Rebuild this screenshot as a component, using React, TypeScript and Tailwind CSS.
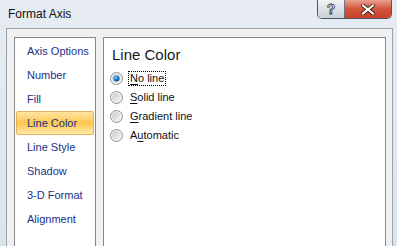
import React from "react";

const items = ["Axis Options", "Number", "Fill", "Line Color", "Line Style", "Shadow", "3-D Format", "Alignment"];

function Radio({ checked }: { checked?: boolean }) {
  return (
    <svg width="13" height="13" viewBox="0 0 13 13" className="shrink-0">
      <defs>
        <linearGradient id={checked ? "rgc" : "rgu"} x1="0" y1="0" x2="1" y2="1">
          <stop offset="0" stopColor="#c9c9c9" />
          <stop offset="1" stopColor="#f6f6f6" />
        </linearGradient>
        <radialGradient id="dot" cx="0.4" cy="0.35" r="0.7">
          <stop offset="0" stopColor="#8fd3ff" />
          <stop offset="0.5" stopColor="#1c7fc8" />
          <stop offset="1" stopColor="#0b3f7a" />
        </radialGradient>
      </defs>
      <circle cx="6.5" cy="6.5" r="6" fill="#f4f4f4" stroke="#8f8f8f" strokeWidth="1" />
      <circle cx="6.5" cy="6.5" r="4.5" fill={`url(#${checked ? "rgc" : "rgu"})`} />
      {checked && <circle cx="6.5" cy="6.5" r="3" fill="url(#dot)" />}
    </svg>
  );
}

function RadioRow({ checked, pre, u, post, focus }: { checked?: boolean; pre: string; u: string; post: string; focus?: boolean }) {
  return (
    <div className="flex h-[19px] items-center pl-[6px]">
      <Radio checked={checked} />
      <span className={`ml-[6px] px-px leading-[13px] ${focus ? "outline outline-1 outline-dotted outline-black" : ""}`}>
        {pre}
        <span className="underline underline-offset-2">{u}</span>
        {post}
      </span>
    </div>
  );
}

export default function App() {
  return (
    <div
      className="flex h-[246px] w-[397px] flex-col overflow-hidden bg-gradient-to-b from-[#e6ecf2] to-[#dbe3eb]"
      style={{ fontFamily: '"Liberation Sans", Arial, sans-serif' }}
    >
      <div className="flex h-[28px] shrink-0 items-start">
        <div className="pl-[8px] pt-[7px] text-[12px] leading-[14px] text-[#111]">Format Axis</div>
        <div className="ml-auto mr-[5px] flex h-[19px] overflow-hidden rounded-b-[5px] border border-t-0 border-[#4f5966]">
          <div className="flex w-[27px] items-center justify-center border-r border-[#6b7480] bg-gradient-to-b from-[#f2f4f6] via-[#dde2e7] to-[#c9d0d7] text-[14px] font-bold leading-none text-[#f8f8f8]" style={{ WebkitTextStroke: "0.8px #333" }}>
            ?
          </div>
          <div className="flex w-[46px] items-center justify-center bg-gradient-to-b from-[#e9a08f] via-[#d2553c] to-[#c7412a]">
            <svg width="14" height="11" viewBox="0 0 14 11">
              <path d="M2 1.5 L12 9.5 M12 1.5 L2 9.5" stroke="#3a1a14" strokeWidth="4" strokeLinecap="square" />
              <path d="M2 1.5 L12 9.5 M12 1.5 L2 9.5" stroke="#fff" strokeWidth="2.2" strokeLinecap="square" />
            </svg>
          </div>
        </div>
      </div>
      <div className="ml-[6px] mr-[4px] flex flex-1 gap-[7px] border border-b-0 border-[#9aa3ad] bg-[#f0f0f0] pl-[7px] pr-[6px] pt-[8px]">
        <div className="w-[82px] shrink-0 border border-b-0 border-[#828790] bg-white p-px">
          {items.map((it) => (
            <div
              key={it}
              className={`flex h-[24px] items-center rounded-[2px] border pl-[10px] text-[11px] text-[#1b2f8a] ${
                it === "Line Color"
                  ? "border-[#e5b05a] bg-gradient-to-b from-[#ffe6a0] via-[#ffc548] to-[#ffe9a6]"
                  : "border-transparent"
              }`}
            >
              {it}
            </div>
          ))}
        </div>
        <div className="flex-1 border border-b-0 border-[#828790] bg-white">
          <div className="pl-[8px] pt-[7px] text-[15px] leading-[20px] text-[#1a1a1a]">Line Color</div>
          <div className="mt-[4px] text-[11px] text-[#111]">
            <RadioRow checked pre="" u="N" post="o line" focus />
            <RadioRow pre="" u="S" post="olid line" />
            <RadioRow pre="" u="G" post="radient line" />
            <RadioRow pre="A" u="u" post="tomatic" />
          </div>
        </div>
      </div>
    </div>
  );
}
